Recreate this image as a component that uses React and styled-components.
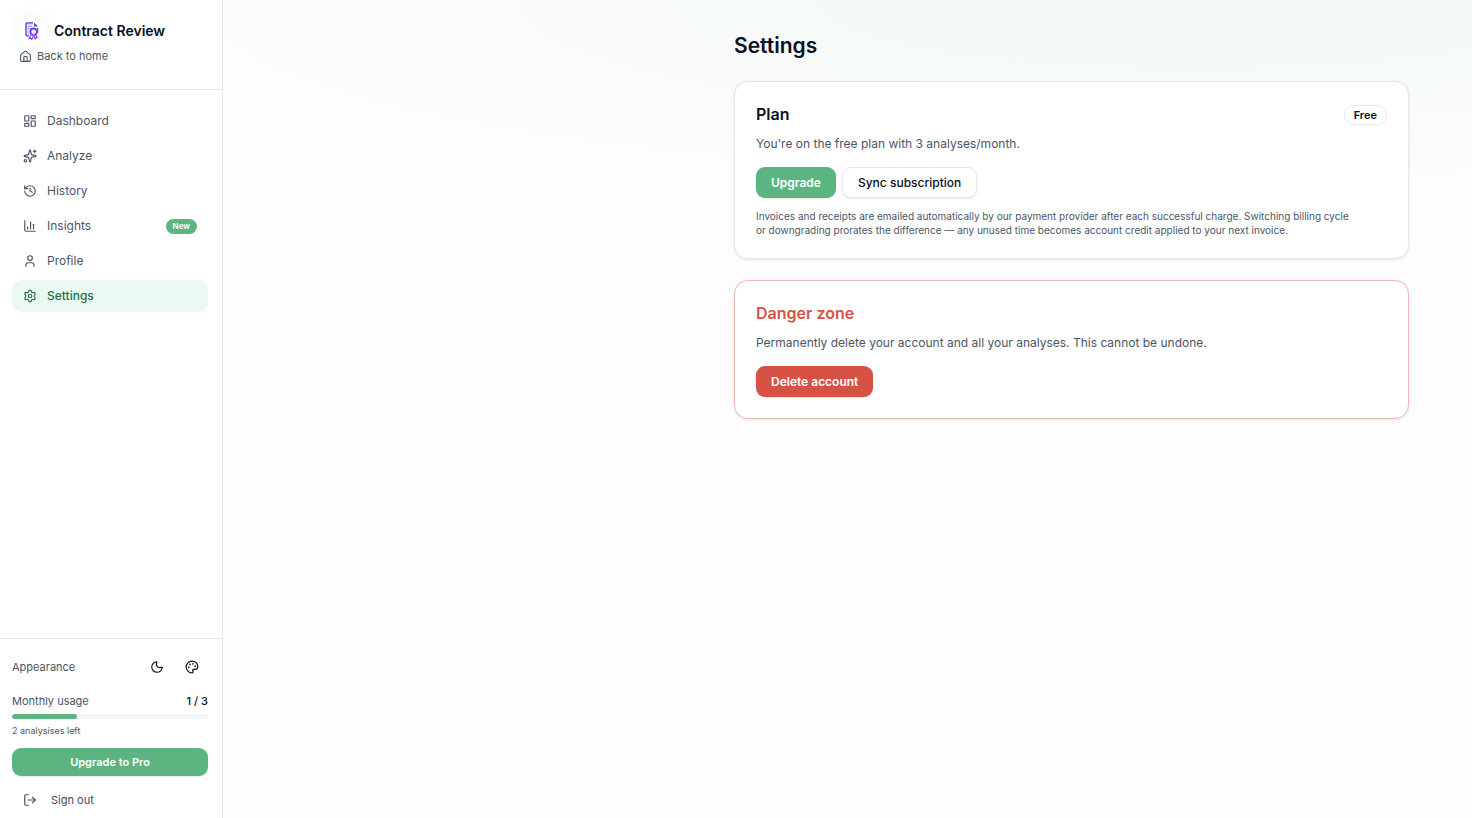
import React from 'react'
import styled, { createGlobalStyle } from 'styled-components'
import {
  House,
  LayoutDashboard,
  Sparkles,
  History,
  ChartColumn,
  User,
  Settings,
  Moon,
  Palette,
  LogOut,
} from 'lucide-react'

const GlobalStyle = createGlobalStyle`
  *, *::before, *::after {
    box-sizing: border-box;
  }

  body {
    margin: 0;
    background: #fdfdfd;
    color: #0b0f24;
    font-family: Inter, "Liberation Sans", sans-serif;
    font-size: 12px;
    line-height: 18px;
  }

  h1, h2, p {
    margin: 0;
  }

  button {
    font-family: inherit;
    cursor: pointer;
  }
`

const Layout = styled.div`
  display: flex;
  min-height: 100vh;
`

const Sidebar = styled.aside`
  display: flex;
  flex-direction: column;
  flex-shrink: 0;
  width: 223px;
  background: #fff;
  border-right: 1px solid #e6e7ee;
`

const Brand = styled.div`
  height: 90px;
  padding: 17px 19px 0;
  border-bottom: 1px solid #e6e7ee;
`

const BrandRow = styled.div`
  display: flex;
  align-items: center;
  gap: 10px;
  height: 28px;
`

const Logo = styled.span`
  display: grid;
  place-items: center;
  width: 25px;
  height: 28px;
  border-radius: 50%;
  box-shadow: 0 0 18px rgba(92, 181, 128, 0.12);
`

const BrandName = styled.span`
  font-size: 14px;
  font-weight: 600;
  line-height: 20px;
`

const HomeLink = styled.a`
  display: inline-flex;
  align-items: center;
  gap: 5px;
  margin-top: 3px;
  color: #4b5568;
  font-size: 11px;
  line-height: 16px;
  text-decoration: none;
`

const Nav = styled.nav`
  display: flex;
  flex-direction: column;
  flex-grow: 1;
  gap: 3px;
  padding: 15px 14px 14px 12px;
`

const NavItem = styled.a`
  display: flex;
  align-items: center;
  gap: 10px;
  height: 32px;
  padding: 0 11px;
  border-radius: 10px;
  color: ${props => (props.$active ? '#2c6e49' : '#4b5568')};
  background: ${props => (props.$active ? '#eaf9f2' : 'transparent')};
  font-weight: ${props => (props.$active ? 500 : 400)};
  text-decoration: none;
`

const NewBadge = styled.span`
  margin-left: auto;
  padding: 0 7px;
  border-radius: 8px;
  background: #5cb580;
  color: #fff;
  font-size: 8px;
  font-weight: 600;
  line-height: 15px;
`

const SidebarFooter = styled.div`
  display: flex;
  flex-direction: column;
  padding: 12px 14px 2px 12px;
  border-top: 1px solid #e6e7ee;
  color: #4b5568;
  font-size: 11px;
  line-height: 16px;
`

const FooterRow = styled.div`
  display: flex;
  align-items: center;
  justify-content: space-between;
`

const IconButtons = styled.div`
  display: flex;
  gap: 3px;
`

const IconButton = styled.button`
  display: grid;
  place-items: center;
  width: 32px;
  height: 32px;
  padding: 0;
  border: 0;
  border-radius: 8px;
  background: none;
  color: #0b0f24;
`

const UsageRow = styled(FooterRow)`
  margin-top: 10px;
`

const UsageCount = styled.span`
  color: #0b0f24;
  font-weight: 500;
`

const Track = styled.div`
  height: 5px;
  margin: 5px 0;
  border-radius: 3px;
  background: #f4f5fa;
  overflow: hidden;
`

const Fill = styled.div`
  height: 100%;
  border-radius: 3px;
  background: #5cb580;
`

const UsageNote = styled.p`
  font-size: 9px;
  line-height: 14px;
`

const UpgradePro = styled.button`
  height: 28px;
  margin-top: 10px;
  border: 0;
  border-radius: 9px;
  background: #5cb580;
  box-shadow: 0 1px 2px rgba(11, 15, 36, 0.1);
  color: #fff;
  font-size: 11px;
  font-weight: 600;
`

const SignOut = styled.button`
  display: flex;
  align-items: center;
  gap: 14px;
  height: 32px;
  margin-top: 8px;
  padding: 0 11px;
  border: 0;
  background: none;
  color: #3f495c;
  font-size: 11px;
  font-weight: 400;
`

const Main = styled.main`
  flex-grow: 1;
  min-width: 0;
  padding: 32px 63px 32px 24px;
  background: radial-gradient(ellipse 1060px 190px at 78% 0, #f1f8f5, rgba(253, 253, 253, 0));
`

const Content = styled.div`
  display: flex;
  flex-direction: column;
  gap: 21px;
  max-width: 675px;
  margin-left: auto;
`

const PageTitle = styled.h1`
  font-size: 21px;
  font-weight: 600;
  line-height: 28px;
`

const Card = styled.section`
  padding: 21px;
  border: 1px solid ${props => (props.$danger ? '#f0b9b4' : '#e6e7ee')};
  border-radius: 14px;
  background: #fff;
  box-shadow: 0 1px 3px rgba(11, 15, 36, 0.1);
`

const CardHeader = styled.div`
  display: flex;
  align-items: flex-end;
  justify-content: space-between;
`

const CardTitle = styled.h2`
  color: ${props => (props.$danger ? '#d65245' : 'inherit')};
  font-size: 16px;
  font-weight: 600;
  line-height: 22px;
`

const CardText = styled.p`
  margin-top: 10px;
  color: #4b5568;
`

const PlanBadge = styled.span`
  padding: 0 9px;
  border: 1px solid #e6e7ee;
  border-radius: 10px;
  font-size: 11px;
  font-weight: 600;
  line-height: 18px;
`

const Actions = styled.div`
  display: flex;
  gap: 6px;
  margin-top: 14px;
`

const buttonColors = {
  primary: '#5cb580',
  danger: '#d65245',
  outline: '#fff',
}

const Button = styled.button`
  height: 31px;
  padding: 0 15px;
  border: ${props => (props.$variant === 'outline' ? '1px solid #e6e7ee' : '0')};
  border-radius: 9px;
  background: ${props => buttonColors[props.$variant]};
  box-shadow: 0 1px 2px rgba(11, 15, 36, 0.1);
  color: ${props => (props.$variant === 'outline' ? '#0b0f24' : '#fff')};
  font-size: 12px;
  font-weight: ${props => (props.$variant === 'outline' ? 500 : 600)};
`

const FinePrint = styled.p`
  margin-top: 11px;
  color: #4b5568;
  font-size: 10px;
  line-height: 14px;
`

const navItems = [
  { label: 'Dashboard', icon: LayoutDashboard },
  { label: 'Analyze', icon: Sparkles },
  { label: 'History', icon: History },
  { label: 'Insights', icon: ChartColumn, badge: 'New' },
  { label: 'Profile', icon: User },
  { label: 'Settings', icon: Settings, active: true },
]

const LogoMark = () => (
  <svg width="14" height="18" viewBox="0 0 14 18" fill="none" aria-hidden="true">
    <defs>
      <linearGradient id="mark" x1="0" y1="0" x2="14" y2="18" gradientUnits="userSpaceOnUse">
        <stop stopColor="#4a3fd0" />
        <stop offset="1" stopColor="#8b3df5" />
      </linearGradient>
    </defs>
    <path d="M1.700 1h6v4h3v3L6 10.500 4 13.500H1.700z" fill="#dcd7fb" />
    <path d="M8 .9H2a1 1 0 0 0-1 1v11a1 1 0 0 0 1 1h2" stroke="url(#mark)" strokeWidth="1.400" strokeLinejoin="round" />
    <path d="M9 .4l4 4H9z" fill="#5a3fe0" />
    <path d="M3.500 4.500h3M3.500 6.500h3.500" stroke="#a79cf2" />
    <path d="M12.600 6v5" stroke="url(#mark)" strokeWidth="1.400" />
    <circle cx="8.600" cy="9.800" r="3.200" fill="#eee8fe" stroke="url(#mark)" strokeWidth="1.600" />
    <path d="M6.200 12.500L4 16.500l2-.3.800 1.300 1.500-3.500M10.500 12.500l1.700 3.300-1.400 0-.6 1.200-1.300-3" stroke="#7b3df0" strokeWidth="1.100" />
  </svg>
)

const App = () => {
  const used = 1
  const limit = 3

  return (
    <>
      <GlobalStyle />
      <Layout>
        <Sidebar>
          <Brand>
            <BrandRow>
              <Logo><LogoMark /></Logo>
              <BrandName>Contract Review</BrandName>
            </BrandRow>
            <HomeLink href="#home">
              <House size={13} />
              Back to home
            </HomeLink>
          </Brand>
          <Nav>
            {navItems.map(({ label, icon: Icon, badge, active }) => (
              <NavItem key={label} href={`#${label.toLowerCase()}`} $active={active}>
                <Icon size={14} />
                {label}
                {badge && <NewBadge>{badge}</NewBadge>}
              </NavItem>
            ))}
          </Nav>
          <SidebarFooter>
            <FooterRow>
              <span>Appearance</span>
              <IconButtons>
                <IconButton type="button" aria-label="Dark mode"><Moon size={14} /></IconButton>
                <IconButton type="button" aria-label="Theme"><Palette size={14} /></IconButton>
              </IconButtons>
            </FooterRow>
            <UsageRow>
              <span>Monthly usage</span>
              <UsageCount>{used} / {limit}</UsageCount>
            </UsageRow>
            <Track>
              <Fill style={{ width: `${(used / limit) * 100}%` }} />
            </Track>
            <UsageNote>{limit - used} analysises left</UsageNote>
            <UpgradePro type="button">Upgrade to Pro</UpgradePro>
            <SignOut type="button">
              <LogOut size={14} />
              Sign out
            </SignOut>
          </SidebarFooter>
        </Sidebar>
        <Main>
          <Content>
            <PageTitle>Settings</PageTitle>
            <Card>
              <CardHeader>
                <CardTitle>Plan</CardTitle>
                <PlanBadge>Free</PlanBadge>
              </CardHeader>
              <CardText>You're on the free plan with 3 analyses/month.</CardText>
              <Actions>
                <Button type="button" $variant="primary">Upgrade</Button>
                <Button type="button" $variant="outline">Sync subscription</Button>
              </Actions>
              <FinePrint>
                Invoices and receipts are emailed automatically by our payment provider after each successful charge.
                Switching billing cycle
                <br />
                or downgrading prorates the difference — any unused time becomes account
                credit applied to your next invoice.
              </FinePrint>
            </Card>
            <Card $danger>
              <CardTitle $danger>Danger zone</CardTitle>
              <CardText>Permanently delete your account and all your analyses. This cannot be undone.</CardText>
              <Actions>
                <Button type="button" $variant="danger">Delete account</Button>
              </Actions>
            </Card>
          </Content>
        </Main>
      </Layout>
    </>
  )
}

export default App
